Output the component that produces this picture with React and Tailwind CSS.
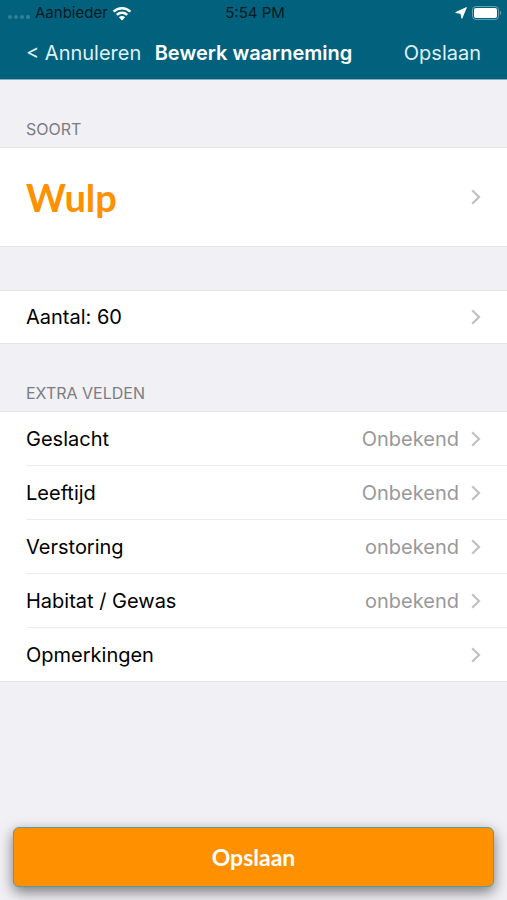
import { useState } from "react";

const extraFields = [
  { label: "Geslacht", value: "Onbekend" },
  { label: "Leeftijd", value: "Onbekend" },
  { label: "Verstoring", value: "onbekend" },
  { label: "Habitat / Gewas", value: "onbekend" },
  { label: "Opmerkingen", value: "" },
];

const Chevron = () => (
  <svg
    viewBox="0 0 10 16"
    className="h-4 w-[10px] shrink-0"
    fill="none"
    stroke="#c1c1c5"
    strokeWidth="2.2"
    aria-hidden="true"
  >
    <path d="M1.2 1.2 8 8l-6.8 6.8" />
  </svg>
);

const WifiIcon = () => (
  <svg viewBox="0 0 20 15" className="ml-1 h-[15px] w-5" aria-hidden="true">
    <g fill="none" stroke="#fff" strokeWidth="2.5">
      <path d="M1.6 5.7a12 12 0 0 1 16.8 0" />
      <path d="M4.8 8.9a7.4 7.4 0 0 1 10.4 0" />
    </g>
    <path d="M10 14.4 6.9 11.2a4.4 4.4 0 0 1 6.2 0Z" fill="#fff" />
  </svg>
);

const LocationIcon = () => (
  <svg viewBox="0 0 12 12" className="h-3 w-3" aria-hidden="true">
    <path
      d="M11.4.6 6.9 11.3 5.9 6.4.7 5.5Z"
      fill="#fff"
      stroke="#fff"
      strokeWidth=".9"
      strokeLinejoin="round"
    />
  </svg>
);

const BatteryIcon = () => (
  <svg viewBox="0 0 30 14" className="h-[14px] w-[30px]" aria-hidden="true">
    <rect x=".5" y=".5" width="26" height="13" rx="3.5" fill="none" stroke="#fff" strokeOpacity=".4" />
    <rect x="2" y="2" width="23" height="10" rx="2" fill="#fff" />
    <path d="M28 4.8c1.6.6 1.6 3.8 0 4.4Z" fill="#fff" fillOpacity=".4" />
  </svg>
);

const StatusBar = () => (
  <div className="grid h-[26px] grid-cols-[1fr_auto_1fr] items-center pr-[5px] pl-2 text-[15px] leading-5 text-[#031a22]">
    <div className="flex items-center">
      <div className="mt-2 mr-[5px] flex gap-[2px]">
        <span className="h-1 w-1 rounded-full bg-white/20" />
        <span className="h-1 w-1 rounded-full bg-white/20" />
        <span className="h-1 w-1 rounded-full bg-white/20" />
        <span className="h-1 w-1 rounded-full bg-white/20" />
      </div>
      <span>Aanbieder</span>
      <WifiIcon />
    </div>
    <span>5:54 PM</span>
    <div className="flex items-center justify-end gap-[5px]">
      <LocationIcon />
      <BatteryIcon />
    </div>
  </div>
);

const SectionTitle = ({ children }) => (
  <h2 className="flex h-[67px] items-end px-[26px] pb-2 text-[16px] leading-5 text-[#7c7c81] uppercase">
    {children}
  </h2>
);

const App = () => {
  const [species] = useState("Wulp");
  const [count] = useState(60);

  return (
    <div className="flex min-h-screen flex-col bg-[#f0f0f5] font-['Inter',sans-serif] text-black">
      <header className="border-b border-[#7fb0bf] bg-[#02627e]">
        <StatusBar />
        <nav className="grid h-[53px] grid-cols-[1fr_auto_1fr] items-center px-[26px] text-[20px] text-[#dff1f6]">
          <button type="button" className="justify-self-start whitespace-nowrap">
            &lt; Annuleren
          </button>
          <h1 className="font-semibold whitespace-nowrap text-white">
            Bewerk waarneming
          </h1>
          <button type="button" className="justify-self-end">
            Opslaan
          </button>
        </nav>
      </header>

      <main className="flex-1">
        <SectionTitle>Soort</SectionTitle>
        <button
          type="button"
          className="flex h-[100px] w-full items-center justify-between border-y border-[#e4e4e8] bg-white px-[26px]"
        >
          <span className="font-['Lato',sans-serif] text-[38px] font-bold text-[#ff9000]">
            {species}
          </span>
          <Chevron />
        </button>

        <button
          type="button"
          className="mt-[43px] flex h-[54px] w-full items-center justify-between border-y border-[#e4e4e8] bg-white px-[26px] text-[20px]"
        >
          <span>Aantal: {count}</span>
          <Chevron />
        </button>

        <SectionTitle>Extra velden</SectionTitle>
        <ul className="border-y border-[#e4e4e8] bg-white pl-[26px]">
          {extraFields.map((field) => (
            <li
              key={field.label}
              className="border-b border-[#ececef] last:border-b-0"
            >
              <button
                type="button"
                className="flex h-[53px] w-full items-center pr-[26px] text-[20px]"
              >
                <span className="flex-1 text-left">{field.label}</span>
                <span className="mr-3 text-[#98989b]">{field.value}</span>
                <Chevron />
              </button>
            </li>
          ))}
        </ul>
      </main>

      <footer className="overflow-hidden p-[13px]">
        <button
          type="button"
          className="h-[60px] w-full rounded-md border border-[#5f9c94] bg-[#ff9000] font-['Lato',sans-serif] text-[23px] font-bold text-white shadow-[0_5px_14px_rgba(0,0,0,0.5)]"
        >
          Opslaan
        </button>
      </footer>
    </div>
  );
};

export default App;
